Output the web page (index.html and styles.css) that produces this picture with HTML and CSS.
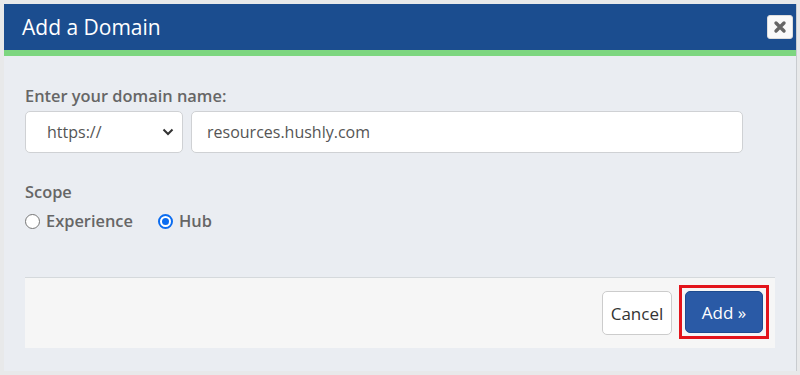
FILE: index.html
```html
<!DOCTYPE html>
<html>
<head>
<meta charset="utf-8">
<link rel="stylesheet" href="styles.css">
</head>
<body>
<div class="modal">
  <div class="header">
    <h1 class="title">Add a Domain</h1>
    <button class="close" aria-label="Close">
      <svg width="14" height="14" viewBox="0 0 14 14"><path d="M3 3 L11 11 M11 3 L3 11" stroke="#666" stroke-width="3.4" stroke-linecap="round"/></svg>
    </button>
  </div>
  <div class="body">
    <div class="label">Enter your domain name:</div>
    <div class="row">
      <div class="select">
        <span>https://</span>
        <svg class="chev" width="12" height="8" viewBox="0 0 12 8"><path d="M1.5 1.5 L6 6 L10.5 1.5" fill="none" stroke="#333" stroke-width="2"/></svg>
      </div>
      <div class="input">resources.hushly.com</div>
    </div>
    <div class="label scope">Scope</div>
    <div class="radios">
      <label class="radio"><span class="dot"></span>Experience</label>
      <label class="radio"><span class="dot on"></span>Hub</label>
    </div>
    <div class="footer">
      <button class="btn cancel">Cancel</button>
      <span class="highlight"><button class="btn add">Add »</button></span>
    </div>
  </div>
</div>
</body>
</html>
```
FILE: styles.css
```css
html, body { margin: 0; padding: 0; }
body {
  background: #e8e9ea;
  font-family: "Open Sans", "Noto Sans", sans-serif;
  width: 800px;
  height: 375px;
  overflow: hidden;
}
.modal {
  margin: 4px 3px 0 4px;
  width: 793px;
  height: 367px;
  background: #eaedf2;
  border-right: 1px solid #c9ccd0;
  box-sizing: border-box;
}
.header {
  height: 46px;
  background: #1b4d8f;
  border-bottom: 6px solid #7dd680;
  display: flex;
  align-items: flex-start;
  justify-content: space-between;
}
.title {
  margin: 0;
  padding: 9px 0 0 18px;
  font-size: 21px;
  font-weight: 400;
  line-height: 28px;
  color: #fff;
}
.close {
  margin: 11px 3px 0 0;
  width: 26px;
  height: 24px;
  background: #fafafa;
  border: 1px solid #ddd;
  border-radius: 3px;
  padding: 0;
  display: flex;
  align-items: center;
  justify-content: center;
}
.body {
  padding: 28px 20px 0 21px;
}
.label {
  font-size: 16.4px;
  line-height: 24px;
  font-weight: 600;
  color: #666;
}
.row {
  display: flex;
  gap: 8px;
  margin-top: 3px;
}
.select, .input {
  height: 42px;
  box-sizing: border-box;
  background: #fff;
  border: 1px solid #cfd1d4;
  border-radius: 5px;
  font-size: 16px;
  color: #555;
  display: flex;
  align-items: center;
}
.select {
  width: 158px;
  padding: 0 8px 0 21px;
  justify-content: space-between;
}
.input {
  width: 552px;
  padding-left: 15px;
}
.scope {
  margin-top: 27px;
}
.radios {
  display: flex;
  gap: 25px;
  margin-top: 5px;
  height: 24px;
}
.radio {
  display: flex;
  align-items: center;
  font-size: 16.4px;
  line-height: 24px;
  font-weight: 600;
  color: #666;
}
.dot {
  width: 15px;
  height: 15px;
  box-sizing: border-box;
  border: 1px solid #767676;
  border-radius: 50%;
  background: #fff;
  margin: 0 6px 0 0;
}
.dot.on {
  border: 2px solid #0b6cf0;
  background: #fff;
  position: relative;
}
.dot.on::after {
  content: "";
  position: absolute;
  left: 2px;
  top: 2px;
  width: 7px;
  height: 7px;
  border-radius: 50%;
  background: #0b6cf0;
}
.footer {
  margin-top: 44px;
  height: 71px;
  box-sizing: border-box;
  background: #f6f6f6;
  border-top: 1px solid #d5d9dc;
  display: flex;
  justify-content: flex-end;
  align-items: flex-start;
  gap: 7px;
  padding: 13px 6px 0 0;
  width: 750px;
}
.btn {
  font-family: "Open Sans", "Noto Sans", sans-serif;
  font-size: 17px;
  border-radius: 5px;
  padding: 0;
}
.cancel {
  width: 70px;
  height: 44px;
  background: #fff;
  border: 1px solid #ccc;
  color: #333;
}
.highlight {
  display: block;
  margin-top: -6px;
  padding: 3px;
  border: 3px solid #e3141b;
}
.add {
  display: block;
  width: 78px;
  height: 42px;
  background: #2a5aa6;
  border: 1px solid #1d4b8f;
  color: #fff;
}
```
